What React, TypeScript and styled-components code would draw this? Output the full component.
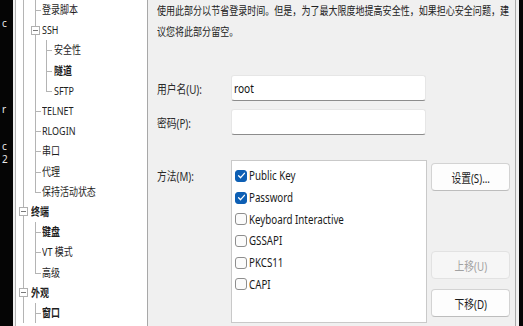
import styled, { createGlobalStyle } from 'styled-components';

const GlobalStyle = createGlobalStyle`
  html, body {
    margin: 0;
    padding: 0;
    overflow: hidden;
    background: #000;
  }
  body {
    font-family: "Noto Sans", "Noto Sans CJK SC", sans-serif;
    color: #1c1c1c;
  }
`;

type Guide = 'none' | 'line' | 'tee' | 'half' | 'box';

const TREE: { text: string; guides: Guide[]; bold?: boolean }[] = [
    { text: '登录脚本', guides: ['line', 'tee'] },
    { text: 'SSH', guides: ['line', 'box'] },
    { text: '安全性', guides: ['line', 'line', 'tee'] },
    { text: '隧道', guides: ['line', 'line', 'tee'], bold: true },
    { text: 'SFTP', guides: ['line', 'line', 'half'] },
    { text: 'TELNET', guides: ['line', 'tee'] },
    { text: 'RLOGIN', guides: ['line', 'tee'] },
    { text: '串口', guides: ['line', 'tee'] },
    { text: '代理', guides: ['line', 'tee'] },
    { text: '保持活动状态', guides: ['line', 'half'] },
    { text: '终端', guides: ['box'], bold: true },
    { text: '键盘', guides: ['line', 'tee'], bold: true },
    { text: 'VT 模式', guides: ['line', 'tee'] },
    { text: '高级', guides: ['line', 'half'] },
    { text: '外观', guides: ['box'], bold: true },
    { text: '窗口', guides: ['line', 'tee'], bold: true },
];

const METHODS = [
    { name: 'Public Key', on: true },
    { name: 'Password', on: true },
    { name: 'Keyboard Interactive', on: false },
    { name: 'GSSAPI', on: false },
    { name: 'PKCS11', on: false },
    { name: 'CAPI', on: false },
];

const Frame = styled.div`
  display: flex;
  width: 523px;
  height: 326px;
  overflow: hidden;
  background: #f0f0f0;
`;

const BlackEdge = styled.div<{ $w: number }>`
  flex: none;
  width: ${p => p.$w}px;
  background: #050505;
  color: #e8e8e8;
  font-size: 10px;
  overflow: hidden;
  display: flex;
  flex-direction: column;
`;

const Fragment = styled.span<{ $top: number }>`
  margin-top: ${p => p.$top}px;
  margin-left: 2px;
  line-height: 10px;
`;

const Gap = styled.div<{ $w: number }>`
  flex: none;
  width: ${p => p.$w}px;
`;

const TreePane = styled.div`
  flex: none;
  width: 129px;
  background: #fff;
  border-left: 1px solid #b4b4b4;
  border-right: 1px solid #a8a8a8;
  padding-left: 2px;
  box-sizing: content-box;
  overflow: hidden;
`;

const TreeRow = styled.div<{ $bold?: boolean }>`
  display: flex;
  height: 20.2px;
  font-size: 11.5px;
  font-weight: ${p => (p.$bold ? 700 : 400)};
  color: #1e1e1e;
`;

const GuideCell = styled.span`
  position: relative;
  flex: none;
  width: 11.5px;
  height: 100%;
`;

const VLine = styled.span<{ $half?: boolean }>`
  position: absolute;
  left: 5px;
  top: 0;
  width: 1px;
  height: ${p => (p.$half ? '50%' : '100%')};
  background: #b4b4b4;
`;

const Tick = styled.span`
  position: absolute;
  left: 5px;
  top: 50%;
  width: 6px;
  height: 1px;
  background: #b4b4b4;
`;

const ExpandBox = styled.span`
  position: absolute;
  left: 1px;
  top: 50%;
  margin-top: -4.5px;
  box-sizing: border-box;
  width: 9px;
  height: 9px;
  border: 1px solid #b0b0b0;
  background: #fff;
  display: flex;
  align-items: center;
  justify-content: center;
  &::after {
    content: '';
    width: 5px;
    height: 1px;
    background: #7a7a7a;
  }
`;

const Squeeze = styled.span<{ $origin?: string }>`
  display: inline-block;
  white-space: nowrap;
  transform: scaleX(0.78);
  transform-origin: ${p => p.$origin || 'left center'};
`;

const TreeLabel = styled(Squeeze)`
  margin-left: 1px;
  align-self: center;
  line-height: 14px;
`;

const Panel = styled.div`
  flex: none;
  width: 358px;
  padding: 0 0 0 9px;
  border-right: 1px solid #a9a9a9;
  display: flex;
  flex-direction: column;
  overflow: hidden;
  font-size: 12px;
`;

const Description = styled.p`
  margin: 0;
  width: 462px;
  font-size: 11.8px;
  line-height: 20.5px;
  color: #222;
  transform: scaleX(0.765);
  transform-origin: left top;
`;

const FieldRow = styled.div<{ $top: number }>`
  display: flex;
  align-items: center;
  margin-top: ${p => p.$top}px;
  height: 26px;
`;

const Label = styled.div`
  flex: none;
  width: 74px;
  color: #2a2a2a;
  font-size: 12.5px;
`;

const TextBox = styled.div`
  flex: none;
  box-sizing: border-box;
  width: 195px;
  height: 26px;
  background: #fff;
  border: 1px solid #e6e6e6;
  border-bottom: 1px solid #8c8c8c;
  border-radius: 3px;
  padding-left: 2px;
  display: flex;
  align-items: center;
  font-size: 13px;
  color: #111;
`;

const MethodRow = styled.div`
  display: flex;
  margin-top: 25px;
  height: 163px;
`;

const MethodLabel = styled(Label)`
  padding-top: 6px;
`;

const ListBox = styled.div`
  flex: none;
  box-sizing: border-box;
  width: 196px;
  background: #fff;
  border: 1px solid #c9c9c9;
  padding: 4px 0 0 3px;
  display: flex;
  flex-direction: column;
`;

const Option = styled.div`
  display: flex;
  align-items: center;
  height: 21.7px;
  gap: 2px;
  font-size: 12.5px;
  color: #1a1a1a;
`;

const Box = styled.span<{ $on: boolean }>`
  flex: none;
  box-sizing: border-box;
  width: 12px;
  height: 12px;
  border-radius: 3px;
  background: ${p => (p.$on ? '#0d5fb4' : '#fbfbfb')};
  border: 1px solid ${p => (p.$on ? '#0d5fb4' : '#8e8e8e')};
  display: flex;
  align-items: center;
  justify-content: center;
`;

const ButtonColumn = styled.div`
  flex: none;
  width: 79px;
  margin-left: 4px;
  padding: 3px 0 6px;
  display: flex;
  flex-direction: column;
  gap: 10px;
`;

const Spacer = styled.div`
  flex: 1;
`;

const Button = styled.div<{ $disabled?: boolean }>`
  box-sizing: border-box;
  height: 28px;
  border-radius: 4px;
  background: ${p => (p.$disabled ? '#f6f6f6' : '#fdfdfd')};
  border: 1px solid ${p => (p.$disabled ? '#e2e2e2' : '#d3d3d3')};
  border-bottom-color: ${p => (p.$disabled ? '#e2e2e2' : '#bdbdbd')};
  color: ${p => (p.$disabled ? '#a2a2a2' : '#1c1c1c')};
  display: flex;
  align-items: center;
  justify-content: center;
  font-size: 12.5px;
`;

function Check() {
    return (
        <svg width="9" height="9" viewBox="0 0 9 9">
            <path d="M1.6 4.8 L3.6 6.7 L7.4 2.3" fill="none" stroke="#fff" strokeWidth="1.3" strokeLinecap="round" strokeLinejoin="round" />
        </svg>
    );
}

export default function App() {
    return (
        <Frame>
            <GlobalStyle />
            <BlackEdge $w={13}>
                <Fragment $top={18}>c</Fragment>
                <Fragment $top={76}>r</Fragment>
                <Fragment $top={27}>c</Fragment>
                <Fragment $top={3}>2</Fragment>
            </BlackEdge>
            <Gap $w={2} />
            <TreePane>
                {TREE.map(item => (
                    <TreeRow key={item.text} $bold={item.bold}>
                        {item.guides.map((g, i) => (
                            <GuideCell key={i}>
                                {g !== 'none' && <VLine $half={g === 'half'} />}
                                {(g === 'tee' || g === 'half') && <Tick />}
                                {g === 'box' && <ExpandBox />}
                            </GuideCell>
                        ))}
                        <TreeLabel>{item.text}</TreeLabel>
                    </TreeRow>
                ))}
            </TreePane>
            <Panel>
                <Description>
                    使用此部分以节省登录时间。但是，为了最大限度地提高安全性，如果担心安全问题，建议您将此部分留空。
                </Description>
                <FieldRow $top={34}>
                    <Label><Squeeze>用户名(U):</Squeeze></Label>
                    <TextBox><Squeeze>root</Squeeze></TextBox>
                </FieldRow>
                <FieldRow $top={8}>
                    <Label><Squeeze>密码(P):</Squeeze></Label>
                    <TextBox />
                </FieldRow>
                <MethodRow>
                    <MethodLabel><Squeeze>方法(M):</Squeeze></MethodLabel>
                    <ListBox>
                        {METHODS.map(m => (
                            <Option key={m.name}>
                                <Box $on={m.on}>{m.on && <Check />}</Box>
                                <Squeeze>{m.name}</Squeeze>
                            </Option>
                        ))}
                    </ListBox>
                    <ButtonColumn>
                        <Button><Squeeze $origin="center">设置(S)...</Squeeze></Button>
                        <Spacer />
                        <Button $disabled><Squeeze $origin="center">上移(U)</Squeeze></Button>
                        <Button><Squeeze $origin="center">下移(D)</Squeeze></Button>
                    </ButtonColumn>
                </MethodRow>
            </Panel>
            <Gap $w={3} />
            <BlackEdge $w={6} />
        </Frame>
    );
}
